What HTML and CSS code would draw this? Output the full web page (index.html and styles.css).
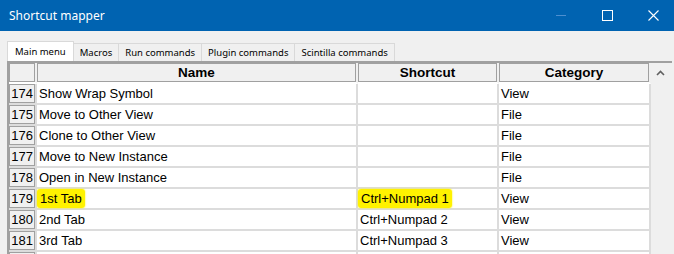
FILE: index.html
```html
<!DOCTYPE html>
<html lang="en">
<head>
    <meta charset="UTF-8">
    <title>Shortcut mapper</title>
    <link rel="stylesheet" href="styles.css">
</head>
<body>
    <div class="window">
        <!-- Title bar -->
        <div class="titlebar">
            <span class="title">Shortcut mapper</span>
            <div class="controls">
                <span class="ctrl"><span class="min"></span></span>
                <span class="ctrl"><span class="max"></span></span>
                <span class="ctrl">
                    <svg width="11" height="11" viewBox="0 0 11 11">
                        <path d="M0.5 0.5 L10.5 10.5 M10.5 0.5 L0.5 10.5" stroke="#fff" stroke-width="1.1" fill="none"/>
                    </svg>
                </span>
            </div>
        </div>

        <!-- Tabs -->
        <div class="tabs">
            <div class="tab active">Main menu</div>
            <div class="tab">Macros</div>
            <div class="tab">Run commands</div>
            <div class="tab">Plugin commands</div>
            <div class="tab">Scintilla commands</div>
        </div>

        <!-- Grid -->
        <div class="grid">
            <table>
                <thead>
                    <tr>
                        <th class="num"></th>
                        <th class="name">Name</th>
                        <th class="key">Shortcut</th>
                        <th class="cat">Category</th>
                    </tr>
                </thead>
                <tbody>
                    <tr><td class="num">174</td><td>Show Wrap Symbol</td><td></td><td>View</td></tr>
                    <tr><td class="num">175</td><td>Move to Other View</td><td></td><td>File</td></tr>
                    <tr><td class="num">176</td><td>Clone to Other View</td><td></td><td>File</td></tr>
                    <tr><td class="num">177</td><td>Move to New Instance</td><td></td><td>File</td></tr>
                    <tr><td class="num">178</td><td>Open in New Instance</td><td></td><td>File</td></tr>
                    <tr><td class="num">179</td><td><span class="mark">1st Tab</span></td><td><span class="mark">Ctrl+Numpad 1</span></td><td>View</td></tr>
                    <tr><td class="num">180</td><td>2nd Tab</td><td>Ctrl+Numpad 2</td><td>View</td></tr>
                    <tr><td class="num">181</td><td>3rd Tab</td><td>Ctrl+Numpad 3</td><td>View</td></tr>
                    <tr><td class="num"></td><td></td><td></td><td></td></tr>
                </tbody>
            </table>
            <div class="scrollbar">
                <svg width="9" height="6" viewBox="0 0 9 6">
                    <path d="M1 5 L4.5 1.5 L8 5" stroke="#606060" stroke-width="1.6" fill="none"/>
                </svg>
            </div>
        </div>
    </div>
</body>
</html>
```

FILE: styles.css
```css
body {
    margin: 0;
    background-color: #f0f0f0;
    overflow: hidden;
}

.window {
    width: 674px;
    height: 254px;
    overflow: hidden;
    background-color: #f0f0f0;
}

.titlebar {
    height: 31px;
    background-color: #0063b1;
    display: flex;
    align-items: center;
    padding-left: 9px;
}

.title {
    color: #fff;
    font-family: "Noto Sans", sans-serif;
    font-size: 12px;
}

.controls {
    margin-left: auto;
    margin-right: -2px;
    display: flex;
}

.ctrl {
    width: 46px;
    height: 31px;
    display: flex;
    align-items: center;
    justify-content: center;
}

.min {
    width: 10px;
    height: 1px;
    background-color: #4d8fd0;
}

.max {
    width: 9px;
    height: 9px;
    border: 1px solid #fff;
}

.tabs {
    display: flex;
    align-items: flex-end;
    height: 30px;
    padding-left: 7px;
}

.tab {
    height: 17px;
    padding: 0 6px;
    line-height: 18px;
    border: 1px solid #d9d9d9;
    border-bottom: none;
    border-left: none;
    font-family: "Noto Sans", sans-serif;
    font-size: 9.5px;
    color: #000;
}

.tab.active {
    height: 19px;
    line-height: 20px;
    background-color: #fff;
    border-left: 1px solid #d9d9d9;
    padding: 0 7px;
}

.grid {
    margin-left: 7px;
    width: 663px;
    height: 200px;
    border-top: 2px solid #a0a0a0;
    border-left: 2px solid #a0a0a0;
    display: flex;
}

table {
    border-collapse: separate;
    border-spacing: 0;
    table-layout: fixed;
    width: 642px;
    font-family: "Liberation Sans", Arial, sans-serif;
    font-size: 13px;
    color: #000;
}

th, td {
    box-sizing: border-box;
}

th {
    height: 21px;
    background-color: #f0f0f0;
    box-shadow: inset 0 0 0 1px #a0a0a0;
    border-right: 2px solid #f0f0f0;
    border-bottom: 2px solid #fff;
    font-weight: bold;
    font-size: 13.5px;
    padding: 0;
}

td {
    height: 21px;
    padding: 0 0 0 2px;
    background-color: #fff;
    border-right: 2px solid #dcdcdc;
    border-bottom: 2px solid #dcdcdc;
    white-space: nowrap;
}

.num {
    width: 28px;
}

.name {
    width: 321px;
}

.key {
    width: 141px;
}

.cat {
    width: 152px;
}

td.num {
    background-color: #f0f0f0;
    box-shadow: inset 0 0 0 1px #a0a0a0;
    text-align: right;
    padding: 0 2px 0 0;
}

.mark {
    background-color: #fff200;
    border-radius: 3px;
    padding: 2px 3px;
    margin-left: -2px;
    box-shadow: 0 0 2px #fff200;
}

.scrollbar {
    width: 19px;
    background-color: #f0f0f0;
    display: flex;
    justify-content: center;
    padding-top: 7px;
    height: 200px;
    box-sizing: border-box;
}
```
